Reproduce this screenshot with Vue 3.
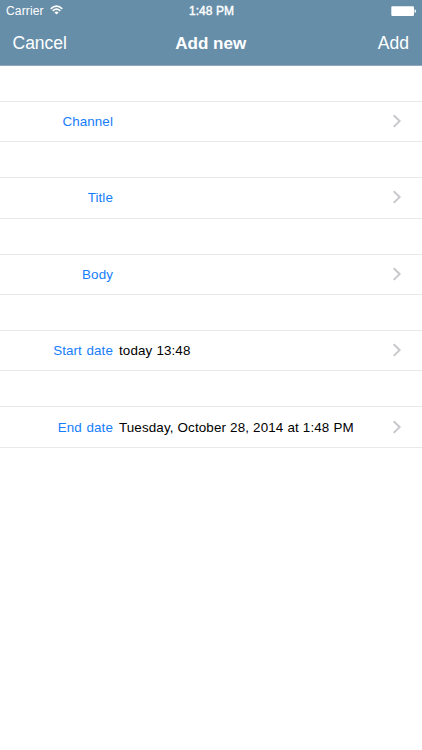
<script setup>
const rows = [
  { label: 'Channel', value: '' },
  { label: 'Title', value: '' },
  { label: 'Body', value: '' },
  { label: 'Start date', value: 'today 13:48' },
  { label: 'End date', value: 'Tuesday, October 28, 2014 at 1:48 PM' },
]
</script>

<template>
  <div class="screen">
    <header class="header">
      <div class="status">
        <div class="carrier">
          <span>Carrier</span>
          <svg class="wifi" width="13" height="10" viewBox="0 0 13 10" fill="none" stroke="#fff">
            <path d="M.7 3.8Q6.5-1.7 12.3 3.8" stroke-width="1.7" />
            <path d="M2.7 5.9Q6.5 2.5 10.3 5.9" stroke-width="1.6" />
            <path d="M6.5 9.6L4.4 7.4Q6.5 5.8 8.6 7.4Z" fill="#fff" stroke="none" />
          </svg>
        </div>
        <span class="clock">1:48 PM</span>
        <svg class="battery" width="26" height="11" viewBox="0 0 26 11">
          <rect x=".3" y=".2" width="22.7" height="9.8" rx="1.2" fill="#fff" />
          <path d="M23.6 3.3Q25.2 3.7 25.2 5.1Q25.2 6.5 23.6 6.9Z" fill="#fff" />
        </svg>
      </div>
      <nav class="nav">
        <span class="cancel">Cancel</span>
        <span class="title">Add new</span>
        <span class="add">Add</span>
      </nav>
    </header>
    <main class="form">
      <div v-for="row in rows" :key="row.label" class="row">
        <span class="label">{{ row.label }}</span>
        <span class="value">{{ row.value }}</span>
        <svg class="chevron" width="10" height="14" viewBox="0 0 10 14" fill="none">
          <path d="M1.7 1.3L7.6 7.1L1.7 12.9" stroke="#c7c7cc" stroke-width="2" />
        </svg>
      </div>
    </main>
  </div>
</template>

<style>
body {
  margin: 0;
  background: #fff;
}
</style>

<style scoped>
.screen {
  width: 422px;
  height: 750px;
  overflow: hidden;
  background: #fff;
  font-family: "Liberation Sans", Arial, sans-serif;
  color: #000;
}
.header {
  box-sizing: border-box;
  height: 66px;
  background: #678ea9;
  border-bottom: 1px solid #91a7bf;
  color: #fff;
}
.status {
  display: grid;
  grid-template-columns: 1fr auto 1fr;
  align-items: center;
  height: 22px;
  padding: 0 5px 0 6px;
  font-size: 12px;
}
.carrier {
  display: flex;
  align-items: center;
  gap: 6px;
  letter-spacing: 0.15px;
}
.wifi {
  margin-top: -2px;
}
.clock {
  font-size: 12px;
  letter-spacing: 0.05px;
  -webkit-text-stroke: 0.4px #fff;
}
.battery {
  justify-self: end;
}
.nav {
  display: grid;
  grid-template-columns: 1fr auto 1fr;
  align-items: center;
  height: 43px;
  padding: 0 13px 0 12.5px;
  font-size: 17.5px;
}
.title {
  font-size: 17px;
  font-weight: bold;
}
.add {
  justify-self: end;
}
.form {
  padding-top: 35px;
}
.row {
  box-sizing: border-box;
  display: flex;
  align-items: center;
  height: 41.3px;
  margin-bottom: 35.05px;
  padding-right: 20px;
  border-top: 1px solid #e8e8ea;
  border-bottom: 1px solid #e8e8ea;
  font-size: 13.4px;
}
.label {
  width: 113px;
  margin-right: 6px;
  text-align: right;
  letter-spacing: 0.1px;
  word-spacing: 0.8px;
  color: #157efb;
}
.value {
  flex: 1;
  white-space: nowrap;
  letter-spacing: 0.12px;
  word-spacing: 0.2px;
}
.chevron {
  margin-bottom: 1px;
}
</style>
